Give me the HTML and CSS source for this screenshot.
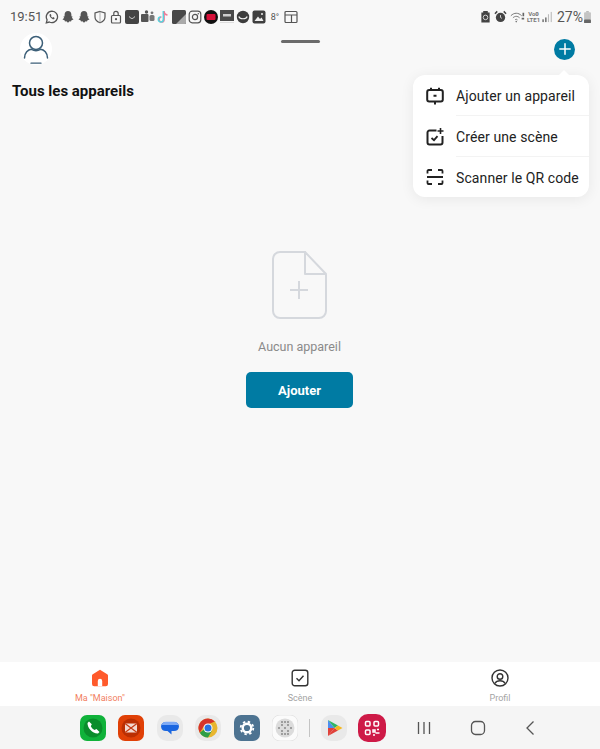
FILE: index.html
```html
<!DOCTYPE html>
<html lang="fr">
<head>
    <meta charset="UTF-8">
    <meta name="viewport" content="width=device-width, initial-scale=1.0">
    <title>Tous les appareils</title>
    <link rel="stylesheet" href="styles.css">
</head>
<body>
    <div class="page">
        <!-- barre d'etat -->
        <div class="status">
            <span class="time">19:51</span>
            <div class="notifs">
                <svg class="s" viewBox="0 0 14 14"><path d="M7 1.200a5.700 5.700 0 0 0-4.900 8.600L1.300 12.800l3-.8A5.700 5.700 0 1 0 7 1.200z" fill="none" stroke="#555" stroke-width="1.300"/><path d="M4.800 4.200c-.6.8-.2 2.200 1 3.500s2.700 1.900 3.500 1.200l.3-1-1.400-.8-.7.6c-.7-.3-1.300-1-1.600-1.700l.6-.6-.8-1.400z" fill="#555"/></svg>
                <svg class="s" viewBox="0 0 14 14"><path d="M7 1c2.200 0 3.400 1.700 3.400 3.700v1.500l1.300.6-.9 1 1.700 1.800-2 .6-.5 1.200-1.400-.2L7 12.800 5.400 11.200 4 11.400l-.5-1.200-2-.6 1.700-1.800-.9-1 1.300-.6V4.700C3.600 2.700 4.800 1 7 1z" fill="#555"/></svg>
                <svg class="s" viewBox="0 0 14 14"><path d="M7 1c2.200 0 3.400 1.700 3.400 3.700v1.500l1.300.6-.9 1 1.700 1.800-2 .6-.5 1.200-1.400-.2L7 12.800 5.400 11.200 4 11.400l-.5-1.200-2-.6 1.700-1.800-.9-1 1.300-.6V4.700C3.600 2.700 4.800 1 7 1z" fill="#555"/></svg>
                <svg class="s" viewBox="0 0 14 14"><path d="M7 1.500 12 3v4c0 3-2.200 4.800-5 5.700C4.200 11.800 2 10 2 7V3z" fill="none" stroke="#555" stroke-width="1.200"/><path d="M7 1.500V12.700" stroke="#999" stroke-width=".8"/></svg>
                <svg class="s" viewBox="0 0 14 14"><rect x="2.500" y="5.500" width="9" height="7.500" rx="1" fill="none" stroke="#555" stroke-width="1.200"/><path d="M4.800 5.500V3.500a2.200 2.200 0 0 1 4.400 0v2" fill="none" stroke="#555" stroke-width="1.200"/><circle cx="7" cy="9.200" r="1.100" fill="#555"/></svg>
                <svg class="s" viewBox="0 0 14 14"><rect width="14" height="14" rx="2" fill="#444"/><path d="M4.500 6.500c.6 2.600 4.400 2.600 5 0" fill="none" stroke="#ddd" stroke-width="1"/></svg>
                <svg class="s" viewBox="0 0 14 14"><rect x="0" y="4" width="7.500" height="8" rx="1" fill="#555"/><rect x="8.500" y="5" width="5" height="6" rx="1.500" fill="#777"/><circle cx="5.500" cy="2" r="1.700" fill="#555"/><circle cx="11" cy="2.800" r="1.400" fill="#777"/></svg>
                <svg class="s" viewBox="0 0 14 14"><path d="M8 1v8.500a2.500 2.500 0 1 1-2.500-2.500" fill="none" stroke="#ee7d98" stroke-width="1.700"/><path d="M7.300 1v8.500a2.500 2.500 0 1 1-2.500-2.500" fill="none" stroke="#58d3dc" stroke-width="1.500"/><path d="M8 2c.5 1.800 1.800 2.800 3.500 3" fill="none" stroke="#ee7d98" stroke-width="1.500"/></svg>
                <svg class="s" viewBox="0 0 14 14"><rect width="14" height="14" rx="1.500" fill="#484848"/><path d="M14 4v8.500a1.500 1.500 0 0 1-1.500 1.500H4z" fill="#aaa"/></svg>
                <svg class="s" viewBox="0 0 14 14"><rect x="1.200" y="1.200" width="11.600" height="11.600" rx="3" fill="none" stroke="#555" stroke-width="1.200"/><circle cx="7" cy="7" r="2.600" fill="none" stroke="#555" stroke-width="1.200"/><circle cx="10.300" cy="3.700" r=".7" fill="#555"/></svg>
                <svg class="s" viewBox="0 0 14 14"><circle cx="7" cy="7" r="7" fill="#111"/><rect x="2.500" y="4" width="9" height="6" rx="1" fill="#d8103a"/></svg>
                <svg class="s" viewBox="0 0 14 14"><rect width="14" height="11" fill="#4a4a4a"/><rect width="14" height="1" y="12" fill="#ddd"/><rect x="3" y="4" width="8" height="2.500" fill="#ccc"/></svg>
                <svg class="s" viewBox="0 0 14 14"><circle cx="7" cy="7" r="6.200" fill="#3d3d3d"/><path d="M2.800 6.500c1.200 3 7.200 3 8.400 0" fill="none" stroke="#eee" stroke-width="1.200"/></svg>
                <svg class="s" viewBox="0 0 14 14"><rect x=".5" y=".5" width="13" height="13" rx="2" fill="#3f3f3f"/><path d="M2.500 11 6 6.500l2 2.500 1.500-1.500 2 3.500z" fill="#eee"/><circle cx="10" cy="4" r="1" fill="#eee"/></svg>
                <span class="deg">8°</span>
                <svg class="s" viewBox="0 0 14 14"><rect x="1" y="1.500" width="12" height="11" rx="1" fill="none" stroke="#555" stroke-width="1.200"/><path d="M1 5h12M7.500 5v7.500" stroke="#555" stroke-width="1.200"/></svg>
            </div>
            <div class="sys">
                <svg class="r" viewBox="0 0 12 14"><path d="M3.500 1h5v1.500H10.500v11h-9v-11h2z" fill="#444"/><circle cx="6" cy="8" r="2.500" fill="none" stroke="#ddd" stroke-width="1"/></svg>
                <svg class="r alarm" viewBox="0 0 14 14"><circle cx="7" cy="8" r="5" fill="#444"/><path d="M1 4 3.500 1.500M13 4 10.500 1.500" stroke="#444" stroke-width="1.600"/><path d="M7 5.500V8l1.500 1" stroke="#ddd" fill="none"/></svg>
                <svg class="wifi" viewBox="0 0 18 14"><path d="M1 5.500C5 1.500 10 1.500 14 5.500M3.500 8C6 5.600 9 5.600 11.500 8M6 10.500c1-1 2.400-1 3 0" fill="none" stroke="#777" stroke-width="1.200"/><circle cx="7.500" cy="12.500" r="1" fill="#777"/><path d="M14 8h3v2h-3zM15 2h2v4h-2z" fill="#666"/></svg>
                <span class="volte">Vo<b>0</b><br>LTE1</span>
                <svg class="bars" viewBox="0 0 12 13"><rect x="1" y="9" width="1.500" height="3" fill="#666"/><rect x="4" y="7" width="1.500" height="5" fill="#666"/><rect x="7" y="3.500" width="1.200" height="8.500" fill="#bbb"/><rect x="10" y="1" width="1.200" height="11" fill="#bbb"/></svg>
                <span class="pct">27%</span>
                <svg class="batt" viewBox="0 0 8 14"><rect x="2.500" y="0" width="3" height="2" fill="#bbb"/><rect x="0" y="1.500" width="8" height="12.500" rx="1" fill="#c4c4c4"/><rect x="0" y="10" width="8" height="4" rx="1" fill="#666"/></svg>
            </div>
        </div>

        <div class="top">
            <div class="avatar">
                <svg viewBox="0 0 32 32" width="32" height="32"><circle cx="16" cy="10" r="6.500" fill="none" stroke="#3c5f78" stroke-width="1.500"/><path d="M4.500 25c0-5 3.500-8.500 7-8.700 2.500 1.500 6.500 1.500 9 0 3.500.2 7 3.700 7 8.700" fill="none" stroke="#3c5f78" stroke-width="1.500" stroke-linecap="round"/><path d="M11 30.200h10" stroke="#3c5f78" stroke-width="1.300" stroke-linecap="round"/></svg>
            </div>
            <div class="handle"></div>
            <div class="plus">
                <svg viewBox="0 0 12 12" width="12" height="12"><path d="M6 .8v10.400M.8 6h10.400" stroke="#fff" stroke-width="1.500" stroke-linecap="round"/></svg>
            </div>
        </div>

        <div class="main">
            <h1>Tous les appareils</h1>
            <div class="empty">
                <svg class="file" viewBox="0 0 56 70" width="56" height="70"><path d="M34 2H9a7 7 0 0 0-7 7v52a7 7 0 0 0 7 7h39a7 7 0 0 0 7-7V25" fill="none" stroke="#d5d8dd" stroke-width="2" stroke-linecap="round"/><path d="M34 2v22h21z" fill="none" stroke="#d5d8dd" stroke-width="2" stroke-linejoin="round"/><path d="M28 31v18M19 40h18" stroke="#d5d8dd" stroke-width="2"/></svg>
                <p>Aucun appareil</p>
                <button type="button">Ajouter</button>
            </div>
        </div>

        <div class="tabs">
            <div class="tab active">
                <svg viewBox="0 0 18 18" width="18" height="18"><path d="M9 .8 1.800 5.200c-.5.300-.8.800-.8 1.400V15a2.200 2.200 0 0 0 2.200 2.200h11.600A2.200 2.200 0 0 0 17 15V6.600c0-.6-.3-1.100-.8-1.400z" fill="#ff5a2c"/><path d="M6.800 17.200V12a2.200 2.200 0 0 1 4.400 0v5.200z" fill="#fff"/></svg>
                <span>Ma "Maison"</span>
            </div>
            <div class="tab">
                <svg viewBox="0 0 18 18" width="18" height="18"><rect x="1.200" y="1.200" width="15.600" height="15.600" rx="2.500" fill="none" stroke="#333" stroke-width="1.400"/><path d="m5.500 9.200 2.500 2.500 4.500-5" fill="none" stroke="#333" stroke-width="1.400"/></svg>
                <span>Scène</span>
            </div>
            <div class="tab">
                <svg viewBox="0 0 18 18" width="18" height="18"><circle cx="9" cy="9" r="8" fill="none" stroke="#333" stroke-width="1.400"/><circle cx="9" cy="7.500" r="2.800" fill="none" stroke="#333" stroke-width="1.400"/><path d="M3.800 14.500c1.200-2 3-2.700 5.200-2.700s4 .7 5.200 2.700" fill="none" stroke="#333" stroke-width="1.400"/></svg>
                <span>Profil</span>
            </div>
        </div>

        <div class="dock">
            <div class="apps">
                <svg class="app" viewBox="0 0 26 26"><rect width="26" height="26" rx="7" fill="#10b23a"/><circle cx="13" cy="13" r="9.500" fill="#0a8d2b"/><path d="M9 6.500 7.500 8c-.3 5 5.500 11 10.500 10.500l1.500-1.500-3-3-2 1c-1.500-.8-3-2.300-3.700-3.800l1-2z" fill="#fff"/></svg>
                <svg class="app" viewBox="0 0 26 26"><rect width="26" height="26" rx="7" fill="#e04006"/><circle cx="13" cy="13" r="9.500" fill="#bb2f02"/><rect x="7" y="8.500" width="12" height="9" fill="#f3d9d0"/><path d="m7 8.500 12 9M19 8.500l-12 9" stroke="#c43a12" stroke-width="1.200"/></svg>
                <svg class="app" viewBox="0 0 26 26"><rect width="26" height="26" rx="10" fill="#e9e9e9"/><path d="M9 7h8a5 5 0 0 1 5 4.500A5 5 0 0 1 17 16h-2.500v3.500L10.500 16H9a5 5 0 0 1-5-4.500A5 5 0 0 1 9 7z" fill="#1a66e0"/><path d="M4.500 10C5 8 7 6.700 9 6.700h8c2 0 4 1.300 4.500 3.300z" fill="#7fabf5"/></svg>
                <svg class="app" viewBox="0 0 26 26"><rect width="26" height="26" rx="10" fill="#e9e9e9"/><circle cx="13" cy="13" r="9.500" fill="#e8b62f"/><path d="M13 3.500a9.500 9.500 0 0 0-8.200 14.300L9 11l10.800-4.500A9.500 9.500 0 0 0 13 3.500z" fill="#d6352b"/><path d="M4.800 17.800A9.500 9.500 0 0 0 13 22.500l4-7-8-1z" fill="#2f9e47"/><circle cx="13" cy="13" r="4.500" fill="#fff"/><circle cx="13" cy="13" r="3.500" fill="#2a73e0"/></svg>
                <svg class="app" viewBox="0 0 26 26"><rect width="26" height="26" rx="7" fill="#4d7391"/><circle cx="13" cy="13" r="4.300" fill="none" stroke="#fff" stroke-width="2.400"/><circle cx="13" cy="13" r="6.300" fill="none" stroke="#fff" stroke-width="1.800" stroke-dasharray="2.400 2.550"/></svg>
                <svg class="app" viewBox="0 0 26 26"><rect width="26" height="26" rx="8" fill="#fbfbfb" stroke="#e6e6e6"/><circle cx="13" cy="13" r="9.500" fill="#dcdcdc"/><g fill="#8a8a8a"><circle cx="10" cy="7" r="1"/><circle cx="16" cy="7" r="1"/><circle cx="7" cy="13" r="1"/><circle cx="13" cy="13" r="1"/><circle cx="19" cy="13" r="1"/><circle cx="13" cy="7" r="1"/><circle cx="10" cy="19" r="1"/><circle cx="13" cy="19" r="1"/><circle cx="16" cy="19" r="1"/><circle cx="10" cy="10" r="1"/><circle cx="16" cy="10" r="1"/><circle cx="10" cy="16" r="1"/><circle cx="16" cy="16" r="1"/></g></svg>
            </div>
            <div class="sep"></div>
            <div class="apps apps-right">
                <svg class="app" viewBox="0 0 26 26"><rect width="26" height="26" rx="10" fill="#e9e9e9"/><path d="M7 5v8l6.500 0z" fill="#4c8df0"/><path d="M7 21v-8h6.500z" fill="#e0413a"/><path d="M7 5l10 5.500-3.500 2.500z" fill="#2fb565"/><path d="M7 21l10-5.500-3.500-2.500z" fill="#e0413a"/><path d="M17 10.500l4.500 2.500-4.500 2.500-3.500-2.500z" fill="#f5b81f"/></svg>
                <svg class="app qr" viewBox="0 0 28 28"><rect width="28" height="28" rx="10" fill="#ce1a47"/><g fill="none" stroke="#fff" stroke-width="1.500"><rect x="7.500" y="7.500" width="4.500" height="4.500" rx="1"/><rect x="16" y="7.500" width="4.500" height="4.500" rx="1"/><rect x="7.500" y="16" width="4.500" height="4.500" rx="1"/><path d="M15 16h2v2h-2zM19 15.500h2M17.500 19h4M15 21h2"/></g></svg>
            </div>
            <div class="nav">
                <svg viewBox="0 0 14 14" width="14" height="14"><path d="M1.500 1v12M7 1v12M12.500 1v12" stroke="#555" stroke-width="1.300"/></svg>
                <svg viewBox="0 0 16 16" width="16" height="16"><rect x="1.500" y="1.500" width="13" height="13" rx="4" fill="none" stroke="#555" stroke-width="1.300"/></svg>
                <svg viewBox="0 0 10 16" width="10" height="16"><path d="M8.500 1.500 2 8l6.500 6.500" fill="none" stroke="#555" stroke-width="1.300"/></svg>
            </div>
        </div>

        <!-- menu ouvert par le bouton + -->
        <div class="menu">
            <div class="menu-item">
                <svg viewBox="0 0 18 18" width="18" height="18"><rect x="1.200" y="3" width="15.600" height="11.500" rx="2" fill="none" stroke="#222" stroke-width="2"/><path d="M5 .8v2.500M13 .8v2.500M9 14.500v3M7.500 8.800h3" stroke="#222" stroke-width="2"/></svg>
                <span>Ajouter un appareil</span>
            </div>
            <div class="menu-item">
                <svg viewBox="0 0 18 18" width="18" height="18"><path d="M10.500 2.500H3.500a2 2 0 0 0-2 2v10a2 2 0 0 0 2 2h11a2 2 0 0 0 2-2V8" fill="none" stroke="#222" stroke-width="2"/><path d="m5.500 10 2.500 2.200 3.500-4" fill="none" stroke="#222" stroke-width="1.800"/><path d="M14.500 0v6M11.500 3h6" stroke="#222" stroke-width="1.600"/></svg>
                <span>Créer une scène</span>
            </div>
            <div class="menu-item">
                <svg viewBox="0 0 18 18" width="18" height="18"><path d="M1.500 5.500V3a1 1 0 0 1 1-1H6M12 2h3.500a1 1 0 0 1 1 1v2.500M1.500 12.500V15a1 1 0 0 0 1 1H6M12 16h3.500a1 1 0 0 0 1-1v-2.500M1 9h16" fill="none" stroke="#222" stroke-width="1.800"/></svg>
                <span>Scanner le QR code</span>
            </div>
        </div>
    </div>
</body>
</html>
```

FILE: styles.css
```css
:root {
    --teal: #007ba3;
    --grey-bg: #f8f8f8;
}

* {
    box-sizing: border-box;
    margin: 0;
    padding: 0;
    font-family: Roboto, 'Liberation Sans', sans-serif;
}

body {
    background-color: var(--grey-bg);
    overflow: hidden;
}

.page {
    position: relative;
    width: 600px;
    height: 749px;
    display: flex;
    flex-direction: column;
}

/* barre d'etat */
.status {
    height: 33px;
    flex: none;
    display: flex;
    align-items: center;
    padding: 0 9px 0 10px;
    color: #555;
}

.time {
    font-size: 13px;
    width: 35px;
}

.notifs {
    display: flex;
    align-items: center;
    gap: 1.930px;
}

.s {
    width: 14px;
    height: 14px;
    display: block;
}

.deg {
    width: 14px;
    font-size: 9px;
    text-align: center;
    color: #555;
}

.sys {
    margin-left: auto;
    display: flex;
    align-items: center;
}

.r {
    width: 11px;
    height: 13px;
    display: block;
}

.alarm {
    width: 13px;
    margin-left: 3px;
}

.wifi {
    width: 15px;
    height: 12px;
    margin-left: 3px;
}

.volte {
    width: 13px;
    margin-left: 2px;
    font-size: 6px;
    line-height: 6px;
    font-weight: 700;
    text-align: center;
    color: #777;
}

.volte b {
    font-size: 6px;
}

.bars {
    width: 12px;
    height: 12px;
    margin-left: 1px;
}

.pct {
    font-size: 14px;
    margin-left: 4px;
}

.batt {
    width: 7px;
    height: 12px;
    margin-left: 1px;
}

/* en-tete */
.top {
    position: relative;
    height: 32px;
    flex: none;
    display: flex;
    align-items: center;
    justify-content: space-between;
    padding: 0 25px 0 20px;
}

.avatar {
    width: 32px;
    height: 32px;
    border-radius: 50%;
    background-color: #fff;
}

.handle {
    width: 39px;
    height: 3px;
    margin: -16px 0 0 -6px;
    border-radius: 2px;
    background-color: #6b6b6b;
}

.plus {
    width: 21px;
    height: 21px;
    border-radius: 50%;
    background-color: var(--teal);
    display: flex;
    align-items: center;
    justify-content: center;
}

.main {
    flex: 1;
    padding: 16px 13px 0 12px;
}

h1 {
    font-size: 15px;
    line-height: 20px;
    font-weight: 700;
    color: #111;
}

.empty {
    display: flex;
    flex-direction: column;
    align-items: center;
    margin-top: 149px;
}

.file {
    display: block;
    margin-left: -2px;
}

.empty p {
    margin-top: 19px;
    font-size: 12.500px;
    line-height: 16px;
    color: #8a8a8a;
}

.empty button {
    margin-top: 17px;
    width: 107px;
    height: 36px;
    border: none;
    border-radius: 5px;
    background-color: var(--teal);
    color: #fff;
    font-size: 13px;
    font-weight: 700;
}

/* onglets du bas */
.tabs {
    height: 44px;
    flex: none;
    display: flex;
    background-color: #fff;
}

.tab {
    flex: 1;
    display: flex;
    flex-direction: column;
    align-items: center;
    padding-top: 7px;
}

.tab svg {
    display: block;
}

.tab span {
    margin-top: 6px;
    font-size: 9px;
    line-height: 11px;
    color: #a3a3a3;
}

.tab.active span {
    color: #f2805f;
}

/* barre android */
.dock {
    height: 43px;
    flex: none;
    display: flex;
    align-items: center;
    padding-left: 80px;
    background-color: #f5f5f5;
}

.apps {
    display: flex;
    align-items: center;
    gap: 12.400px;
}

.app {
    width: 26px;
    height: 26px;
    display: block;
}

.qr {
    width: 28px;
    height: 28px;
}

.sep {
    width: 1px;
    height: 18px;
    margin: 0 11px;
    background-color: #c4c4c4;
}

.apps-right {
    gap: 11px;
}

.nav {
    display: flex;
    align-items: center;
    gap: 39px;
    margin-left: 31px;
}

/* menu */
.menu {
    position: absolute;
    top: 75px;
    left: 413px;
    width: 176px;
    height: 122px;
    padding-left: 13px;
    border-radius: 12px;
    background-color: #fff;
    box-shadow: 0 2px 14px rgba(0, 0, 0, 0.07);
}

.menu::before {
    content: "";
    position: absolute;
    top: -5px;
    left: 146px;
    border-left: 5px solid transparent;
    border-right: 5px solid transparent;
    border-bottom: 5px solid #fff;
}

.menu-item {
    height: 41px;
    display: flex;
    align-items: center;
    gap: 12px;
    font-size: 14px;
    color: #222;
}

.menu-item svg {
    flex: none;
}

.menu-item span {
    flex: 1;
    height: 100%;
    display: flex;
    align-items: center;
    padding-top: 1px;
    border-bottom: 1px solid #f3f3f3;
    white-space: nowrap;
    letter-spacing: 0.1px;
}

.menu-item:last-child {
    height: 40px;
}

.menu-item:last-child span {
    border-bottom: none;
}
```
